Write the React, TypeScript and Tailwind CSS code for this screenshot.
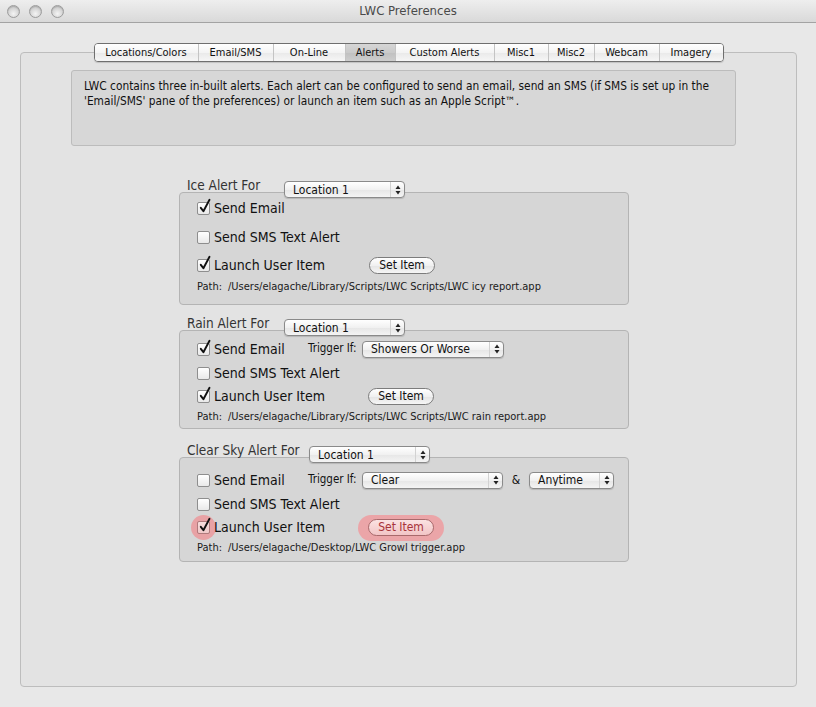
import React from "react";

const FONT = '"DejaVu Sans Condensed", "Liberation Sans", sans-serif';

const TABS = [
  { label: "Locations/Colors", w: 103 },
  { label: "Email/SMS", w: 75 },
  { label: "On-Line", w: 72 },
  { label: "Alerts", w: 50, active: true },
  { label: "Custom Alerts", w: 99 },
  { label: "Misc1", w: 54 },
  { label: "Misc2", w: 46 },
  { label: "Webcam", w: 65 },
  { label: "Imagery", w: 64 },
];

function TrafficLight() {
  return (
    <span className="block w-[13px] h-[13px] rounded-full border border-[#9c9c9c] bg-[radial-gradient(circle_at_50%_70%,#f4f4f4_0%,#d2d2d2_60%,#bdbdbd_100%)] shadow-[inset_0_1px_1px_rgba(0,0,0,0.15)]" />
  );
}

function Arrows() {
  return (
    <svg width="6" height="10" viewBox="0 0 6 10" className="shrink-0">
      <path d="M3 0.5 L5.5 4 H0.5 Z" fill="#222" />
      <path d="M3 9.5 L5.5 6 H0.5 Z" fill="#222" />
    </svg>
  );
}

function Popup({ label, width }: { label: string; width: number }) {
  return (
    <div
      className="flex items-center h-[17px] rounded-[4px] border border-[#8a8a8a] bg-[linear-gradient(#ffffff,#f1f1f1_50%,#e6e6e6_51%,#f4f4f4)] shadow-[0_1px_1px_rgba(0,0,0,0.15)] text-[12px] text-[#111] leading-none"
      style={{ width }}
    >
      <span className="flex-1 pl-[8px] truncate">{label}</span>
      <span className="flex items-center justify-center w-[14px] h-full border-l border-[#d2d2d2]">
        <Arrows />
      </span>
    </div>
  );
}

function Checkbox({ checked, focus }: { checked?: boolean; focus?: boolean }) {
  return (
    <span className="relative block w-[13px] h-[13px] shrink-0">
      {focus && (
        <span className="absolute -left-[6px] -top-[6px] w-[25px] h-[25px] rounded-full bg-[#e8a2a5]" />
      )}
      <span
        className={
          "absolute inset-0 rounded-[2px] border " +
          (focus
            ? "border-[#b07a7c] bg-[linear-gradient(#f8dede,#f0c8c8)]"
            : "border-[#8e8e8e] bg-[linear-gradient(#ffffff,#e9e9e9)]")
        }
      />
      {checked && (
        <svg
          width="14"
          height="16"
          viewBox="0 0 14 16"
          className="absolute left-[1px] -top-[4px]"
        >
          <path
            d="M2.8 9.8 L5.4 13.2 L11.5 1.8"
            fill="none"
            stroke="#111"
            strokeWidth="1.9"
            strokeLinecap="round"
            strokeLinejoin="round"
          />
        </svg>
      )}
    </span>
  );
}

function CheckRow({
  label,
  checked,
  focus,
  width,
}: {
  label: string;
  checked?: boolean;
  focus?: boolean;
  width?: number;
}) {
  return (
    <div className="flex items-center gap-[4px] shrink-0" style={width ? { width } : undefined}>
      <Checkbox checked={checked} focus={focus} />
      <span className="relative text-[14px] text-[#111] leading-none">{label}</span>
    </div>
  );
}

function SetItem({ focus }: { focus?: boolean }) {
  return (
    <div className="relative">
      {focus && (
        <span className="absolute -left-[10px] -top-[4px] w-[86px] h-[26px] rounded-full bg-[#eba5a8]" />
      )}
      <div
        className={
          "relative flex items-center justify-center w-[66px] h-[17px] rounded-full border text-[12px] leading-none " +
          (focus
            ? "border-[#a86a6c] bg-[linear-gradient(#fbe2e2,#f2c5c6)] text-[#a8343a]"
            : "border-[#7c7c7c] bg-[linear-gradient(#ffffff,#f0f0f0_50%,#e4e4e4_51%,#f6f6f6)] text-[#111]")
        }
      >
        Set Item
      </div>
    </div>
  );
}

function PathRow({ path, mt }: { path: string; mt: string }) {
  return (
    <div className={"flex items-center h-[14px] text-[11px] text-[#1a1a1a] leading-none " + mt}>
      <span className="w-[31px]">Path:</span>
      <span>{path}</span>
    </div>
  );
}

function Group({
  title,
  titleWidth,
  className,
  boxHeight,
  children,
}: {
  title: string;
  titleWidth: string;
  className: string;
  boxHeight: string;
  children: React.ReactNode;
}) {
  return (
    <div className={"ml-[158px] w-[450px] " + className}>
      <div className="relative z-10 flex items-start h-[17px] pl-[8px] gap-[9px]">
        <span className={"text-[13.5px] text-[#333] leading-none -mt-[2px] whitespace-nowrap " + titleWidth}>
          {title}
        </span>
        <Popup label="Location 1" width={121} />
      </div>
      <div
        className={
          "-mt-[6px] rounded-[4px] border border-[#b4b4b4] bg-[#d6d6d6] pl-[17px] " + boxHeight
        }
      >
        {children}
      </div>
    </div>
  );
}

export default function App() {
  return (
    <div
      className="w-[816px] h-[707px] bg-[#e8e8e8] overflow-hidden"
      style={{ fontFamily: FONT }}
    >
      {/* title bar */}
      <div className="relative flex items-center h-[23px] border-b border-[#a3a3a3] bg-[linear-gradient(#eeeeee,#d9d9d9)]">
        <div className="flex items-center gap-[9px] pl-[7px]">
          <TrafficLight />
          <TrafficLight />
          <TrafficLight />
        </div>
        <div className="absolute inset-0 flex items-center justify-center text-[13px] text-[#4a4a4a]">
          LWC Preferences
        </div>
      </div>

      {/* tab view */}
      <div className="ml-[20px] mt-[29px] w-[777px] h-[635px] rounded-[4px] border border-[#bdbdbd] bg-[#e3e3e3]">
        <div className="-mt-[10px] flex justify-center">
          <div className="flex h-[19px] rounded-[4px] border border-[#6f6f6f] overflow-hidden shadow-[0_1px_1px_rgba(0,0,0,0.15)]">
            {TABS.map((t, i) => (
              <div
                key={t.label}
                className={
                  "flex items-center justify-center text-[11px] text-[#111] leading-none " +
                  (i > 0 ? "border-l border-[#c4c4c4] " : "") +
                  (t.active
                    ? "bg-[linear-gradient(#d6d6d6,#cacaca_50%,#c0c0c0_51%,#cdcdcd)]"
                    : "bg-[linear-gradient(#ffffff,#f4f4f4_50%,#e9e9e9_51%,#f6f6f6)]")
                }
                style={{ width: t.w }}
              >
                {t.label}
              </div>
            ))}
          </div>
        </div>

        {/* description */}
        <div className="ml-[50px] mt-[8px] w-[665px] h-[76px] rounded-[3px] border border-[#bcbcbc] bg-[#d7d7d7] pl-[12px] pt-[8px] text-[11.8px] leading-[15px] text-[#111]">
          LWC contains three in-built alerts. Each alert can be configured to send an email, send an SMS (if SMS is set up in the
          <br />
          'Email/SMS' pane of the preferences) or launch an item such as an Apple Script™.
        </div>

        {/* Ice */}
        <Group title="Ice Alert For" titleWidth="w-[88px]" className="mt-[35px]" boxHeight="h-[113px]">
          <div className="flex items-center h-[18px] mt-[6px]">
            <CheckRow label="Send Email" checked />
          </div>
          <div className="flex items-center h-[18px] mt-[11px]">
            <CheckRow label="Send SMS Text Alert" />
          </div>
          <div className="flex items-center h-[18px] mt-[10px]">
            <CheckRow label="Launch User Item" checked width={172} />
            <SetItem />
          </div>
          <PathRow mt="mt-[5px]" path="/Users/elagache/Library/Scripts/LWC Scripts/LWC icy report.app" />
        </Group>

        {/* Rain */}
        <Group title="Rain Alert For" titleWidth="w-[88px]" className="mt-[14px]" boxHeight="h-[99px]">
          <div className="flex items-center h-[18px] mt-[9px]">
            <CheckRow label="Send Email" checked width={111} />
            <span className="w-[54px] text-[11.5px] text-[#111] leading-none">Trigger If:</span>
            <Popup label="Showers Or Worse" width={142} />
          </div>
          <div className="flex items-center h-[18px] mt-[6px]">
            <CheckRow label="Send SMS Text Alert" />
          </div>
          <div className="flex items-center h-[18px] mt-[5px]">
            <CheckRow label="Launch User Item" checked width={171} />
            <SetItem />
          </div>
          <PathRow mt="mt-[4px]" path="/Users/elagache/Library/Scripts/LWC Scripts/LWC rain report.app" />
        </Group>

        {/* Clear sky */}
        <Group title="Clear Sky Alert For" titleWidth="w-[113px]" className="mt-[17px]" boxHeight="h-[105px]">
          <div className="flex items-center h-[18px] mt-[13px]">
            <CheckRow label="Send Email" width={111} />
            <span className="w-[54px] text-[11.5px] text-[#111] leading-none">Trigger If:</span>
            <Popup label="Clear" width={141} />
            <span className="w-[26px] text-center text-[12px] text-[#111] leading-none">&amp;</span>
            <Popup label="Anytime" width={85} />
          </div>
          <div className="flex items-center h-[18px] mt-[6px]">
            <CheckRow label="Send SMS Text Alert" />
          </div>
          <div className="flex items-center h-[18px] mt-[5px]">
            <CheckRow label="Launch User Item" checked focus width={171} />
            <SetItem focus />
          </div>
          <PathRow mt="mt-[4px]" path="/Users/elagache/Desktop/LWC Growl trigger.app" />
        </Group>
      </div>
    </div>
  );
}
